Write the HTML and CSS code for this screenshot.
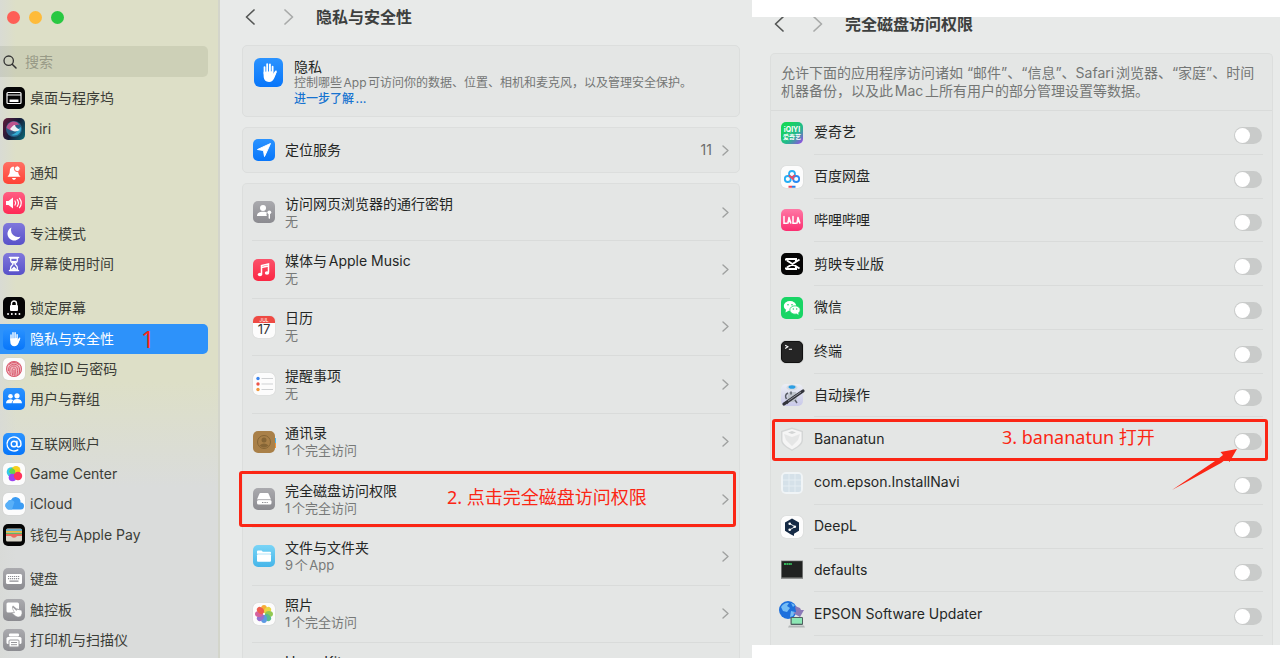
FILE: index.html
```html
<!DOCTYPE html>
<html lang="zh-CN">
<head>
<meta charset="utf-8">
<title>隐私与安全性</title>
<link rel="stylesheet" href="styles.css">
</head>
<body>
<svg class="defs" aria-hidden="true">
  <symbol id="hand" viewBox="0 0 22 22">
    <path d="M7.300 10.500v3.200c0 2.900 1.600 4.500 4.100 4.500 2 0 3.100-1 3.900-2.800l1.900-4.600-1.300-.6-1.700 2.400V10z" fill="#fff"/>
    <path d="M8 12V6.900M10 11V4.700M12.100 11V4.800M14.100 12V6.600M14.600 14.400l2-4.200" stroke="#fff" stroke-width="1.400" stroke-linecap="round" fill="none"/>
  </symbol>
  <symbol id="back" viewBox="0 0 10 16"><path d="M9 1 1.500 8 9 15" fill="none" stroke="currentColor" stroke-width="1.700" stroke-linecap="round" stroke-linejoin="round"/></symbol>
  <symbol id="forward" viewBox="0 0 10 16"><path d="M1 1l7.500 7L1 15" fill="none" stroke="currentColor" stroke-width="1.700" stroke-linecap="round" stroke-linejoin="round"/></symbol>
  <symbol id="more" viewBox="0 0 7 11"><path d="M1 1l5 4.500L1 10" fill="none" stroke="currentColor" stroke-width="1.400" stroke-linecap="round" stroke-linejoin="round"/></symbol>
</svg>
<div class="window">
  <aside class="sidebar">
    <div class="lights"><i class="red"></i><i class="amber"></i><i class="green"></i></div>
    <label class="search">
      <svg width="14" height="14" viewBox="0 0 14 14"><circle cx="5.700" cy="5.700" r="4.700" fill="none" stroke="#333" stroke-width="1.300"/><path d="M9.200 9.200 13 13" stroke="#333" stroke-width="1.500" stroke-linecap="round"/></svg>
      <input type="search" placeholder="搜索" aria-label="搜索">
    </label>
    <nav class="nav">
      <a class="item" href="#"><svg class="tile black" viewBox="0 0 22 22"><rect x="4" y="5.500" width="14" height="11" rx="1" fill="none" stroke="#fff" stroke-width="1.200"/><path d="M4 8h14" stroke="#fff"/><rect x="6.500" y="12.500" width="9" height="2.500" fill="#fff"/></svg>桌面与程序坞</a>
      <a class="item" href="#"><svg class="tile siri" viewBox="0 0 22 22"><circle cx="11" cy="11" r="8" fill="#2b6f9a" opacity=".8"/><path d="M3.500 10c1-7 10-9 13-3-4-1-7 1-8 6z" fill="#e0508e" opacity=".8"/><path d="M18 9c1 6-4 10-10 8 4-1 6-3 7-6z" fill="#35b2d8" opacity=".9"/><path d="M7 11c2-2 3-4 5-4 0 2 2 3 5 5-4 2-7 2-10-1z" fill="#fff" opacity=".9"/></svg>Siri</a>
      <a class="item first" href="#"><svg class="tile red" viewBox="0 0 22 22"><path d="M10.500 4.500c-2.600.2-3.700 2.200-3.700 4.500 0 3-1 4-2.300 5.800h13c-1.300-1.500-2-2.500-2.200-4.300zM9 16h4c-.2 1.200-1 1.800-2 1.800S9.200 17.200 9 16z" fill="#fff"/><circle cx="14.300" cy="6.700" r="2.900" fill="#fff" stroke="#ff5a4d"/></svg>通知</a>
      <a class="item" href="#"><svg class="tile pink" viewBox="0 0 22 22"><path d="M3 9h2.500L10 5.500v11L5.500 13H3z" fill="#fff"/><path d="M12 9q1.500 2 0 4M14.200 7.700q2.500 3.300 0 6.600M16.500 6.300q3.500 4.700 0 9.400" fill="none" stroke="#fff" stroke-width="1.200" stroke-linecap="round"/></svg>声音</a>
      <a class="item" href="#"><svg class="tile indigo" viewBox="0 0 22 22"><path d="M8.500 4.500a6.800 6.800 0 1 0 9 9A7 7 0 0 1 8.500 4.500z" fill="#fff"/></svg>专注模式</a>
      <a class="item" href="#"><svg class="tile indigo" viewBox="0 0 22 22"><path d="M6.500 4.500h9M6.500 17.500h9" stroke="#fff" stroke-width="1.500" stroke-linecap="round"/><path d="M7.700 5v2.500c0 2 2.300 2.300 2.300 3.500s-2.300 1.500-2.300 3.500V17h6.600v-2.500c0-2-2.300-2.300-2.300-3.500s2.300-1.500 2.300-3.500V5z" fill="none" stroke="#fff" stroke-width="1.300"/><path d="M8 8h6l-2.300 2.500h-1.400zM8 16.500l3-3 3 3z" fill="#fff"/></svg>屏幕使用时间</a>
      <a class="item first" href="#"><svg class="tile black" viewBox="0 0 22 22"><rect x="7" y="8" width="8" height="6" rx="1" fill="#fff"/><path d="M8.500 8V6.500a2.500 2.500 0 0 1 5 0V8" fill="none" stroke="#fff" stroke-width="1.400"/><path d="M5 17h12" stroke="#fff" stroke-width="1.800" stroke-linecap="round" stroke-dasharray=".1 3.700"/></svg>锁定屏幕</a>
      <a class="item selected" href="#" aria-current="page"><svg class="tile blue"><use href="#hand"/></svg>隐私与安全性<span class="note step">1</span></a>
      <a class="item" href="#"><svg class="tile white" viewBox="0 0 22 22"><circle cx="11" cy="11" r="8" fill="#f0b8c0"/><g fill="none" stroke="#d95b6f" stroke-width="1"><circle cx="11" cy="11" r="7.500"/><path d="M5.500 13c-.8-8 10-9 11-2 .2 2 0 4-.5 5.500M7.500 16.500c-1.500-4-.8-8.500 3.500-8.500s3.800 5 3 9.500M9.700 17.500c-1-4-.8-7.500 1.300-7.500s1.500 4 .8 8M11 12v5M6 6.500q5-4 10 0"/></g></svg>触控ID与密码</a>
      <a class="item" href="#"><svg class="tile blue" viewBox="0 0 22 22"><g fill="#fff"><circle cx="7.500" cy="8.300" r="2.300"/><circle cx="14" cy="7.800" r="2.600"/><path d="M3 15.300c0-2.600 2-4 4.500-4 1 0 2 .3 2.700.9-1 .8-1.500 2-1.500 3.100zM9.500 15.300c0-2.800 2-4.300 4.700-4.300s4.800 1.500 4.800 4.300z"/></g></svg>用户与群组</a>
      <a class="item first" href="#"><svg class="tile blue" viewBox="0 0 22 22"><g fill="none" stroke="#fff" stroke-width="1.400" stroke-linecap="round"><circle cx="11" cy="11" r="2.800"/><path d="M13.900 8.200v4c0 2.500 4.100 2.500 4.100-1.200a7 7 0 1 0-3.200 5.900"/></g></svg>互联网账户</a>
      <a class="item" href="#"><svg class="tile white" viewBox="0 0 22 22"><circle cx="8.500" cy="9" r="4.800" fill="#36c9e8"/><circle cx="13" cy="7.500" r="4.500" fill="#f7cf1b"/><path d="M9 5a5 5 0 0 1 3 6 6 6 0 0 1-6-2 5 5 0 0 1 3-4z" fill="#60d34e"/><circle cx="9.500" cy="14.500" r="3.800" fill="#9a43ef"/><circle cx="15" cy="13" r="4.200" fill="#ff335c"/></svg>Game Center</a>
      <a class="item" href="#"><svg class="tile white" viewBox="0 0 22 22"><path d="M5.500 16.500A4 4 0 0 1 4.500 9 3.500 3.500 0 0 1 8 7a5 5 0 0 1 9.500 2.500 3.500 3.500 0 0 1 0 7z" fill="#3a9bf3"/><path d="M5.500 16.500A4 4 0 0 1 4.500 9 3.500 3.500 0 0 1 8 7q2 0 3.500 2L9 16.500z" fill="#58b0f8"/></svg>iCloud</a>
      <a class="item" href="#"><svg class="tile black" viewBox="0 0 22 22"><rect x="3" y="4.500" width="16" height="13" rx="1.500" fill="#d9d6c9"/><path d="M3 6h16" stroke="#4a9fc9" stroke-width="1.500"/><path d="M3 7.700h16" stroke="#efb839" stroke-width="1.500"/><path d="M3 9.400h16" stroke="#62b567" stroke-width="1.500"/><path d="M3 10h16v2h-4.500c-1 0-1.500 1.800-3.500 1.800S8.500 12 7.500 12H3z" fill="#ec6d5e"/></svg>钱包与Apple Pay</a>
      <a class="item first" href="#"><svg class="tile gray" viewBox="0 0 22 22"><rect x="3" y="6" width="16" height="10" rx="1.500" fill="#fff"/><path d="M5 8.500h12M5 10.700h12" stroke="#8e8e93" stroke-width="1.200" stroke-dasharray="1.200 .8"/><path d="M6.500 13.200h9" stroke="#8e8e93" stroke-width="1.200"/></svg>键盘</a>
      <a class="item" href="#"><svg class="tile gray" viewBox="0 0 22 22"><path d="M5 3.500h9.500A1.500 1.500 0 0 1 16 5v5l-2.500-.5L10 6.500 9 8l3 5.500H5A1.500 1.500 0 0 1 3.500 12V5A1.500 1.500 0 0 1 5 3.500z" fill="#fff"/><path d="M10.300 8.500l3 3 .7-1.300 4.500 1c1 2 .8 5-1.500 6.500-2 .7-4 0-5.500-1.500L8.700 14l2.800-.3-2-4z" fill="#fff" stroke="#9a9a9e" stroke-width=".6"/></svg>触控板</a>
      <a class="item" href="#"><svg class="tile gray" viewBox="0 0 22 22"><rect x="6" y="4.500" width="10" height="3" rx="1" fill="#fff"/><rect x="3.500" y="8" width="15" height="7" rx="1.500" fill="#fff"/><rect x="6" y="11" width="10" height="7" rx="1" fill="#fff" stroke="#98989c"/><path d="M8 13.500h6M8 15.700h6" stroke="#98989c"/></svg>打印机与扫描仪</a>
    </nav>
  </aside>

  <main class="pane privacy">
    <header class="bar">
      <button class="arrow" aria-label="后退"><svg width="10" height="16"><use href="#back"/></svg></button>
      <button class="arrow dim" aria-label="前进" disabled><svg width="10" height="16"><use href="#forward"/></svg></button>
      <h1>隐私与安全性</h1>
    </header>
    <section class="card intro">
      <svg class="tile blue large"><use href="#hand"/></svg>
      <div>
        <h2>隐私</h2>
        <p>控制哪些App可访问你的数据、位置、相机和麦克风，以及管理安全保护。</p>
        <a class="learn" href="#">进一步了解...</a>
      </div>
    </section>
    <a class="card location" href="#">
      <svg class="tile blue" viewBox="0 0 22 22"><path d="M17.500 4.500 4.500 10.500l6 1 1 6z" fill="#fff" stroke="#fff" stroke-linejoin="round"/></svg>
      <span class="label">定位服务</span><span class="count">11</span><svg class="more"><use href="#more"/></svg>
    </a>
    <div class="card list">
      <a class="row" href="#"><svg class="tile gray" viewBox="0 0 22 22"><g fill="#fff"><circle cx="10" cy="7" r="3"/><path d="M4 15c0-3 2.500-4.300 6-4.300 2 0 3.300.4 4 1-.8 1-.7 2.200 0 3.300z"/><circle cx="16.300" cy="11.300" r="1.900"/><path d="M15.600 12h1.400v5.300l-.7.700-.7-.7z"/></g></svg><span class="label">访问网页浏览器的通行密钥<small>无</small></span><svg class="more"><use href="#more"/></svg></a>
      <a class="row" href="#"><svg class="tile music" viewBox="0 0 22 22"><path d="M8.500 15V6.500l7-1.500v8.500M8.500 8.500l7-1.500" fill="none" stroke="#fff" stroke-width="1.500"/><ellipse cx="7" cy="15.500" rx="2.200" ry="1.800" fill="#fff"/><ellipse cx="14" cy="14" rx="2.200" ry="1.800" fill="#fff"/></svg><span class="label">媒体与Apple Music<small>无</small></span><svg class="more"><use href="#more"/></svg></a>
      <a class="row" href="#"><svg class="tile white" viewBox="0 0 22 22"><path d="M0 0h22v7H0z" fill="#ee4a43"/><text x="11" y="5.500" font-size="5" fill="#fff" text-anchor="middle">JUL</text><text x="11" y="18" font-size="13" fill="#333" text-anchor="middle">17</text></svg><span class="label">日历<small>无</small></span><svg class="more"><use href="#more"/></svg></a>
      <a class="row" href="#"><svg class="tile white" viewBox="0 0 22 22"><path d="M8.500 5.500H20M8.500 11H20M8.500 16.500H20" stroke="#cfd1d3"/><circle cx="5" cy="5.500" r="1.700" fill="#3d86ee"/><circle cx="5" cy="11" r="1.700" fill="#ed5348"/><circle cx="5" cy="16.500" r="1.700" fill="#f2993c"/></svg><span class="label">提醒事项<small>无</small></span><svg class="more"><use href="#more"/></svg></a>
      <a class="row" href="#"><svg class="tile plain" viewBox="0 0 22 22"><path d="M20 7h3v5h-3z" fill="#4db2e8"/><path d="M20 12h3v5h-3z" fill="#f0963a"/><rect width="22" height="22" rx="5" fill="#a98048"/><circle cx="11" cy="11" r="6.500" fill="none" stroke="#866535"/><circle cx="11" cy="9" r="2.500" fill="#866535"/><path d="M6.500 14.500q4.500-4 9 0-4.500 4-9 0z" fill="#866535"/></svg><span class="label">通讯录<small>1个完全访问</small></span><svg class="more"><use href="#more"/></svg></a>
      <a class="row marked" href="#"><svg class="tile gray" viewBox="0 0 22 22"><path d="M6.500 5.500q.3-.5 1-.5h7q.7 0 1 .5l2.500 6H4z" fill="#fff"/><rect x="4" y="12" width="14.500" height="4.500" rx="1.500" fill="#fff"/><path d="M9 14.500h6" stroke="#8e8e93" stroke-dasharray="1 .6"/><path d="M4.500 11.700h13" stroke="#b0b0b3" stroke-width=".8"/></svg><span class="label">完全磁盘访问权限<small>1个完全访问</small></span><span class="note hint">2. 点击完全磁盘访问权限</span><svg class="more"><use href="#more"/></svg></a>
      <a class="row" href="#"><svg class="tile sky" viewBox="0 0 22 22"><path d="M4 6.500q0-1 1-1h3.500l1.300 1.300H17q1 0 1 1V8.700H4z" fill="#fff"/><rect x="4" y="9.300" width="14" height="7.500" rx="1" fill="#fff"/></svg><span class="label">文件与文件夹<small>9个App</small></span><svg class="more"><use href="#more"/></svg></a>
      <a class="row" href="#"><svg class="tile white" viewBox="0 0 22 22"><g opacity=".9"><ellipse cx="11" cy="6" rx="3" ry="4" fill="#f5a623"/><ellipse cx="11" cy="6" rx="3" ry="4" fill="#e6d22e" transform="rotate(45 11 11)"/><ellipse cx="11" cy="6" rx="3" ry="4" fill="#86c440" transform="rotate(90 11 11)"/><ellipse cx="11" cy="6" rx="3" ry="4" fill="#46b483" transform="rotate(135 11 11)"/><ellipse cx="11" cy="6" rx="3" ry="4" fill="#4b8fe0" transform="rotate(180 11 11)"/><ellipse cx="11" cy="6" rx="3" ry="4" fill="#8b62c9" transform="rotate(225 11 11)"/><ellipse cx="11" cy="6" rx="3" ry="4" fill="#d24f92" transform="rotate(270 11 11)"/><ellipse cx="11" cy="6" rx="3" ry="4" fill="#ed4c3c" transform="rotate(315 11 11)"/></g></svg><span class="label">照片<small>1个完全访问</small></span><svg class="more"><use href="#more"/></svg></a>
      <a class="row peek" href="#"><span class="label">HomeKit</span></a>
    </div>
  </main>

  <section class="pane disk">
    <header class="bar">
      <button class="arrow" aria-label="后退"><svg width="10" height="16"><use href="#back"/></svg></button>
      <button class="arrow dim" aria-label="前进" disabled><svg width="10" height="16"><use href="#forward"/></svg></button>
      <h1>完全磁盘访问权限</h1>
    </header>
    <div class="card apps">
      <p class="about">允许下面的应用程序访问诸如 “邮件”、“信息”、Safari浏览器、“家庭”、时间机器备份，以及此Mac上所有用户的部分管理设置等数据。</p>
      <label class="app"><svg class="tile iqiyi" viewBox="0 0 22 22"><text x="11" y="10" font-size="7" font-weight="700" fill="#fff" text-anchor="middle">iQIYI</text><text x="11" y="17" font-size="6" font-weight="700" fill="#fff" text-anchor="middle">爱奇艺</text></svg><span class="name">爱奇艺<input type="checkbox" role="switch"></span></label>
      <label class="app"><svg class="tile white" viewBox="0 0 22 22"><g fill="none" stroke-width="1.800"><circle cx="11" cy="8" r="3" stroke="#26aef5"/><circle cx="6.800" cy="13" r="3" stroke="#26aef5"/><circle cx="15.200" cy="13" r="3" stroke="#298af2"/><path d="M8.100 9c.6 1.700 4 3.300 4.600 4.500M13.900 9c-.8 1-2 2-3.100 2.500" stroke="#f1475c"/></g><path d="M7.500 20.700H11" stroke="#ed4659" stroke-width="2"/><path d="M11 20.700h3.500" stroke="#267fe9" stroke-width="2"/></svg><span class="name">百度网盘<input type="checkbox" role="switch"></span></label>
      <label class="app"><svg class="tile bili" viewBox="0 0 22 22"><path d="M3 7.500v6.700h3M8 8.500l-1 5.500M8 8.500l1.800 5.500M7 12.500h2.500M12 7.500v6.700h3M17 8.500 16 14M17 8.500l1.800 5.500M16.300 12.500h2" fill="none" stroke="#fff" stroke-width="1.500" stroke-linecap="round"/></svg><span class="name">哔哩哔哩<input type="checkbox" role="switch"></span></label>
      <label class="app"><svg class="tile black" viewBox="0 0 22 22"><path d="M18.500 6.500 6 14.500M18.500 15.500 6 7.500M5 6h10v2M5 16h10v-2M5 5.500v2M5 14.500v2" fill="none" stroke="#fff" stroke-width="2"/></svg><span class="name">剪映专业版<input type="checkbox" role="switch"></span></label>
      <label class="app"><svg class="tile wechat" viewBox="0 0 22 22"><ellipse cx="9" cy="9" rx="6.200" ry="5" fill="#fff"/><path d="M5 12.500 4.500 15.500 8 13.500z" fill="#fff"/><ellipse cx="14" cy="13" rx="5.200" ry="4.200" fill="#fff" stroke="#18d565" stroke-width=".8"/><path d="M15.500 16.500l2 1.500-.3-2.500z" fill="#fff"/><g fill="#18d565"><circle cx="7" cy="7.700" r=".8"/><circle cx="11" cy="7.700" r=".8"/><circle cx="12.300" cy="12" r=".7"/><circle cx="15.700" cy="12" r=".7"/></g></svg><span class="name">微信<input type="checkbox" role="switch"></span></label>
      <label class="app"><svg class="tile term" viewBox="0 0 22 22"><path d="M3.500 3.500l3 1.800-3 1.800M7.500 8h3.500" fill="none" stroke="#fff" stroke-width="1.200"/></svg><span class="name">终端<input type="checkbox" role="switch"></span></label>
      <label class="app"><svg class="tile auto" viewBox="0 0 22 22"><ellipse cx="11" cy="3.500" rx="5.500" ry="3" fill="#d5dae0"/><ellipse cx="11" cy="3" rx="3.500" ry="1.800" fill="#2c9fe4"/><path d="M8 8h7l1 7-3 3H9l-3-3z" fill="#bfc4cd"/><path d="M7 9q-4 2-1.500 6M10 7.500v3M14 16l2 3M8 16l-2 4" fill="none" stroke="#5a5e68" stroke-width="1.500"/><path d="M3 20 22 7" stroke="#33343b" stroke-width="3.200" stroke-linecap="round"/><path d="M7 17 20 8" stroke="#a9abb5" stroke-width=".8"/></svg><span class="name">自动操作<input type="checkbox" role="switch"></span></label>
      <label class="app marked"><svg class="tile plain" viewBox="0 0 22 22"><path d="M11-.500 22 3v9c0 5-6 8-11 11C6 20 0 17 0 12V3z" fill="#d4d6d6"/><path d="M11 1l9.500 3v8c0 4-5 7-9.500 9.500C6.500 19 1.500 16 1.500 12V4z" fill="#f5f5f5"/><path d="M3 6l8 3 8-3-2 6-6 6-6-6z" fill="#e5e6e6"/><path d="M7 4.500 11 3l4 1.500L11 6z" fill="#d3d5d5"/></svg><span class="name">Bananatun<span class="note open">3. bananatun 打开</span><input type="checkbox" role="switch"></span>
        <svg class="pointer" viewBox="0 0 66 42"><path d="M0 41 46 10 51 6 48.500 3 65 0 57.500 13 55 9.500 49 14z" fill="#fb2615"/></svg></label>
      <label class="app"><svg class="tile grid" viewBox="0 0 22 22"><rect x="2" y="2" width="18" height="18" rx="2" fill="#d5e1e9"/><path d="M8 2v18M14 2v18M2 8h18M2 14h18" stroke="#e9f0f4" stroke-width=".8"/></svg><span class="name">com.epson.InstallNavi<input type="checkbox" role="switch"></span></label>
      <label class="app"><svg class="tile white" viewBox="0 0 22 22"><path d="M11 2.500l7 4v8.200l-5 3V20l-3-1.600-6-3.700V6.500z" fill="#152a45"/><path d="M8.500 7.500l5.500 3.200-5.500 3.300" fill="none" stroke="#fff" stroke-width=".9"/><circle cx="8.700" cy="7.700" r="1.300" fill="#fff"/><circle cx="13.800" cy="10.700" r="1.300" fill="#fff"/><circle cx="8.700" cy="13.700" r="1.300" fill="#fff"/></svg><span class="name">DeepL<input type="checkbox" role="switch"></span></label>
      <label class="app"><svg class="tile plain" viewBox="0 0 22 22"><path d="M0 1.500h22v18.500H0z" fill="#8f9190"/><path d="M.7 2.200h20.600v16.300H.7z" fill="#202221"/><path d="M3 5h8" stroke="#35b65b" stroke-width="2" stroke-dasharray="2 .4"/></svg><span class="name">defaults<input type="checkbox" role="switch"></span></label>
      <label class="app"><svg class="tile plain" viewBox="0 0 22 22"><circle cx="7" cy="7" r="9" fill="#1d70dc"/><path d="M0 4q4-5 8-4l-2 3 3 2-3 4-4-1zM10 8l4 1-2 4-3 1zM10 0l4 2-2 2z" fill="#75bdf5"/><path d="M14 3l5 2 1 2 3 0-4 7-7-4 3-1z" fill="#8b79b7"/><rect x="9.500" y="14" width="12.500" height="8" rx="1" fill="#506061"/><path d="M10.700 15H21v5.700H10.700z" fill="#8ce7b4"/><path d="M8 22.500h15l1 2H7z" fill="#b4b7b8"/></svg><span class="name">EPSON Software Updater<input type="checkbox" role="switch"></span></label>
    </div>
  </section>
</div>
</body>
</html>
```
FILE: styles.css
```css
* { box-sizing: border-box; }

body {
  margin: 0;
  background: #fff;
  color: #242625;
  font-family: Inter, "Noto Sans CJK SC", sans-serif;
  font-size: 14px;
  line-height: 18px;
  text-autospace: normal;
}

h1, h2, p { margin: 0; font: inherit; }
a { color: inherit; text-decoration: none; }
.defs { position: absolute; width: 0; height: 0; }

.window {
  display: grid;
  grid-template-columns: 220px minmax(0, 532fr) minmax(0, 528fr);
  height: 100vh;
  min-height: 658px;
  overflow: hidden;
}

/* Sidebar */
.sidebar {
  display: flex;
  flex-direction: column;
  padding: 11px 10px 3px 0;
  border-right: 2px solid #d3d5cb;
  background:
    linear-gradient(90deg, rgba(216, 218, 215, .8), rgba(216, 218, 215, 0) 16px),
    linear-gradient(#dddfc7 0, #dddfc7 58%, #dadcdb 74%);
  color: #3b3d37;
}

.lights { display: flex; gap: 9px; padding-left: 7px; }
.lights i { width: 13px; height: 13px; border-radius: 50%; }
.lights .red { background: #fe5f57; }
.lights .amber { background: #febb3a; }
.lights .green { background: #29c842; }

.search {
  display: flex;
  align-items: center;
  gap: 8px;
  height: 31px;
  margin: 22px 0 6px;
  padding-left: 3px;
  border-radius: 0 5px 5px 0;
  background: rgba(70, 74, 50, .1);
}
.search input {
  flex: 1;
  min-width: 0;
  padding: 0;
  border: 0;
  outline: 0;
  background: none;
  font: inherit;
}
.search input::placeholder { color: #989a87; }

.nav { flex: 1; display: flex; flex-direction: column; }
.item {
  flex: 1;
  display: flex;
  align-items: center;
  gap: 5px;
  padding-left: 3px;
  white-space: nowrap;
}
.item.first { margin-top: 14px; }
.item.selected {
  position: relative;
  border-radius: 0 5px 5px 0;
  background: #2d92fa;
  color: #fff;
}

/* Icon tiles */
.tile { flex: none; width: 22px; height: 22px; border-radius: 5px; }
.large { width: 29px; height: 29px; border-radius: 6px; }
.black { background: #050505; }
.siri { background: linear-gradient(120deg, #651a3c, #161b38 50%, #0a6f7c); }
.red { background: linear-gradient(#ff7064, #ff4235); }
.pink { background: linear-gradient(#ff5f83, #ff2955); }
.indigo { background: linear-gradient(#8078dc, #5851c9); }
.blue { background: linear-gradient(#2b93ff, #0876fa); }
.white { background: #fcfcfc; box-shadow: 0 0 1px #bbb; }
.gray { background: linear-gradient(#aaaaae, #8b8b90); }
.music { background: linear-gradient(#fb526a, #fb2743); }
.sky { background: linear-gradient(#79d4f6, #45b5e9); }
.iqiyi { background: linear-gradient(135deg, #16d55b 20%, #23b98d 60%, #a33df0); }
.bili { background: linear-gradient(#ff78a5, #fb2e70); }
.wechat { background: #18d565; }
.term { border: 1px solid #111; background: #252525; box-shadow: 0 0 1px #555; }
.auto { overflow: visible; background: linear-gradient(#eceef3, #c9c9e9); }
.grid { background: #f0f4f6; }
.plain { overflow: visible; }

/* Panes */
.pane {
  display: flex;
  flex-direction: column;
  min-width: 0;
  background: #e8eae9;
}
.privacy { padding: 0 12px 0 22px; }
.disk {
  margin: 17px 0 13px;
  padding: 0 7px 0 18px;
  overflow: hidden;
}

.bar { display: flex; align-items: center; }
.privacy .bar { height: 34px; margin-bottom: 11px; padding-left: 3px; }
.disk .bar { height: 14px; margin-bottom: 22px; padding-left: 4px; }
.bar h1 { color: #3d3f3e; font-size: 16px; font-weight: 700; }
.arrow {
  display: flex;
  margin-right: 29px;
  padding: 0;
  border: 0;
  background: none;
  color: #555756;
}
.arrow.dim { margin-right: 22px; color: #a8aaa9; }

.card {
  border: 1px solid #dcdedd;
  border-radius: 5px;
  background: #e4e6e5;
}
.intro {
  display: flex;
  align-items: flex-start;
  gap: 11px;
  height: 72px;
  margin-bottom: 10px;
  padding: 12px 11px 0;
}
.intro h2 { line-height: 17px; }
.intro p, .learn { display: block; font-size: 12px; line-height: 16px; }
.intro p { color: #747675; }
.learn { color: #1673d0; font-weight: 500; }

.location {
  display: flex;
  align-items: center;
  gap: 10px;
  height: 46px;
  margin-bottom: 10px;
  padding: 0 10px;
}
.label { flex: 1; }
.label small { display: block; color: #777978; font-size: 13px; line-height: 17px; }
.count { color: #6c6e6d; }
.more { flex: none; width: 7px; height: 11px; color: #9fa1a0; }

.list {
  flex: 1;
  display: flex;
  flex-direction: column;
  padding: 0 9px;
  border-bottom: 0;
  border-radius: 5px 5px 0 0;
}
.row {
  position: relative;
  flex: 1;
  display: flex;
  align-items: center;
  gap: 10px;
  padding: 0 1px;
  border-bottom: 1px solid #d9dbda;
}
.row.peek {
  flex: none;
  align-items: flex-start;
  height: 15px;
  padding: 10px 33px 0;
  border: 0;
  overflow: hidden;
}

/* App permissions */
.apps {
  flex: 1;
  display: flex;
  flex-direction: column;
  padding-bottom: 9px;
  border-bottom: 0;
  border-radius: 5px 5px 0 0;
}
.about {
  height: 57px;
  padding: 10px 10px 0;
  border-bottom: 1px solid #d9dbda;
  color: #747675;
}
.app {
  position: relative;
  flex: 1;
  display: flex;
  gap: 11px;
  align-items: center;
  padding: 0 9px 0 10px;
}
.name {
  flex: 1;
  align-self: stretch;
  display: flex;
  align-items: center;
  justify-content: space-between;
  border-bottom: 1px solid #d9dbda;
}
.name input {
  appearance: none;
  display: flex;
  width: 28px;
  height: 17px;
  margin: 6px 1px 0 0;
  padding: 1px;
  border-radius: 9px;
  background: #c9cbca;
}
.name input::before {
  content: "";
  width: 15px;
  height: 15px;
  border-radius: 50%;
  background: #fff;
}
.name input:checked { justify-content: flex-end; background: #2d92fa; }

/* Tutorial annotations */
.note {
  position: absolute;
  color: #fb2615;
  font-family: "Noto Sans", "Noto Sans CJK SC", sans-serif;
  font-size: 18px;
  line-height: 24px;
  white-space: nowrap;
}
.step { left: 141px; font-size: 24px; }
.hint { left: 195px; top: 14px; }
.open { left: 231px; top: 8px; }
.marked::after {
  content: "";
  position: absolute;
  inset: 0 -6px 0 -13px;
  border: 3px solid #fb2615;
  border-radius: 3px;
  pointer-events: none;
}
.app.marked::after { inset: 2px 4px 0 1px; }
.pointer {
  position: absolute;
  z-index: 1;
  right: 34px;
  top: 32px;
  width: 66px;
  height: 42px;
}
```
